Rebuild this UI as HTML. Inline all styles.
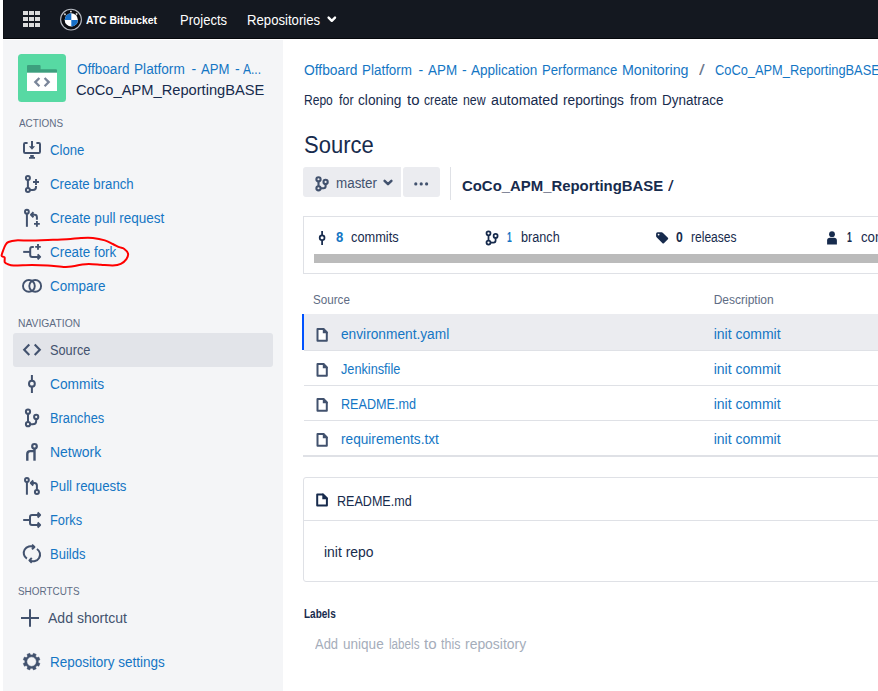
<!DOCTYPE html>
<html><head><meta charset="utf-8"><style>
html,body{margin:0;padding:0;}
body{width:878px;height:691px;overflow:hidden;position:relative;background:#fff;font-family:"Liberation Sans",sans-serif;}
.b{position:absolute;}
.t{position:absolute;white-space:nowrap;font-family:"Liberation Sans",sans-serif;}
svg.ic{position:absolute;left:0;top:0;}
</style></head><body>
<div class="b" style="left:3px;top:0;width:875px;height:39px;background:#141820;"></div>
<div class="b" style="left:3px;top:38px;width:875px;height:1px;background:#06080c;"></div>
<div class="b" style="left:3px;top:0;width:1px;height:39px;background:#0e1117;"></div>
<div class="b" style="left:3px;top:40px;width:280px;height:651px;background:#f4f5f7;"></div>
<div class="b" style="left:13px;top:333px;width:260px;height:34px;background:#e2e4e9;border-radius:3px;"></div>
<div class="b" style="left:303px;top:167px;width:98px;height:30px;background:#ebecf0;border-radius:3px 0 0 3px;"></div>
<div class="b" style="left:403px;top:167px;width:37px;height:30px;background:#ebecf0;border-radius:3px;"></div>
<div class="b" style="left:450px;top:167px;width:1px;height:33px;background:#dfe1e6;"></div>
<div class="b" style="left:303px;top:216px;width:600px;height:56px;border:1px solid #dfe1e6;"></div>
<div class="b" style="left:314px;top:254px;width:600px;height:9px;background:#bbbbbb;"></div>
<div class="b" style="left:304px;top:314px;width:574px;height:36px;background:#ebecf0;"></div>
<div class="b" style="left:302px;top:314px;width:2px;height:36px;background:#0052ff;"></div>
<div class="b" style="left:304px;top:350px;width:574px;height:1px;background:#dfe1e6;"></div>
<div class="b" style="left:304px;top:385px;width:574px;height:1px;background:#dfe1e6;"></div>
<div class="b" style="left:304px;top:420px;width:574px;height:1px;background:#dfe1e6;"></div>
<div class="b" style="left:303px;top:455px;width:575px;height:2px;background:#dfe1e6;"></div>
<div class="b" style="left:303px;top:477px;width:600px;height:103px;border:1px solid #dfe1e6;border-radius:3px;"></div>
<div class="b" style="left:304px;top:520px;width:600px;height:1px;background:#dfe1e6;"></div>

<span class="t" style="left:86.00px;top:11.50px;font-size:10.5px;line-height:16px;color:#ffffff;font-weight:bold;transform:scaleX(0.9923);transform-origin:0 0;">ATC Bitbucket</span>
<span class="t" style="left:180.00px;top:10.00px;font-size:14px;line-height:21px;color:#ffffff;transform:scaleX(0.9298);transform-origin:0 0;">Projects</span>
<span class="t" style="left:246.50px;top:10.00px;font-size:14px;line-height:21px;color:#ffffff;transform:scaleX(0.9396);transform-origin:0 0;">Repositories</span>
<span class="t" style="left:76.60px;top:59.00px;font-size:14px;line-height:21px;color:#1476c4;transform:scaleX(0.9668);transform-origin:0 0;">Offboard</span>
<span class="t" style="left:134.00px;top:59.00px;font-size:14px;line-height:21px;color:#1476c4;transform:scaleX(0.9741);transform-origin:0 0;">Platform</span>
<span class="t" style="left:191.60px;top:59.00px;font-size:14px;line-height:21px;color:#1476c4;">-</span>
<span class="t" style="left:200.70px;top:59.00px;font-size:14px;line-height:21px;color:#1476c4;transform:scaleX(0.9390);transform-origin:0 0;">APM</span>
<span class="t" style="left:234.90px;top:59.00px;font-size:14px;line-height:21px;color:#1476c4;">-</span>
<span class="t" style="left:243.30px;top:59.00px;font-size:14px;line-height:21px;color:#1476c4;transform:scaleX(0.8571);transform-origin:0 0;">A...</span>
<span class="t" style="left:76.40px;top:78.00px;font-size:15.5px;line-height:24px;color:#172b4d;transform:scaleX(0.9467);transform-origin:0 0;">CoCo_APM_ReportingBASE</span>
<span class="t" style="left:18.50px;top:115.00px;font-size:11px;line-height:17px;color:#5e6c84;transform:scaleX(0.9018);transform-origin:0 0;">ACTIONS</span>
<span class="t" style="left:49.50px;top:140.00px;font-size:14px;line-height:21px;color:#1476c4;transform:scaleX(0.9372);transform-origin:0 0;">Clone</span>
<span class="t" style="left:49.50px;top:174.00px;font-size:14px;line-height:21px;color:#1476c4;transform:scaleX(0.9436);transform-origin:0 0;">Create branch</span>
<span class="t" style="left:49.50px;top:208.00px;font-size:14px;line-height:21px;color:#1476c4;transform:scaleX(0.9662);transform-origin:0 0;">Create pull request</span>
<span class="t" style="left:49.50px;top:242.00px;font-size:14px;line-height:21px;color:#1476c4;transform:scaleX(0.9567);transform-origin:0 0;">Create fork</span>
<span class="t" style="left:49.50px;top:276.00px;font-size:14px;line-height:21px;color:#1476c4;transform:scaleX(0.9618);transform-origin:0 0;">Compare</span>
<span class="t" style="left:18.20px;top:315.00px;font-size:11px;line-height:17px;color:#5e6c84;transform:scaleX(0.9381);transform-origin:0 0;">NAVIGATION</span>
<span class="t" style="left:49.50px;top:340.00px;font-size:14px;line-height:21px;color:#42526e;transform:scaleX(0.9109);transform-origin:0 0;">Source</span>
<span class="t" style="left:49.50px;top:374.00px;font-size:14px;line-height:21px;color:#1476c4;transform:scaleX(0.9819);transform-origin:0 0;">Commits</span>
<span class="t" style="left:49.50px;top:408.00px;font-size:14px;line-height:21px;color:#1476c4;transform:scaleX(0.9163);transform-origin:0 0;">Branches</span>
<span class="t" style="left:49.50px;top:442.00px;font-size:14px;line-height:21px;color:#1476c4;transform:scaleX(0.9961);transform-origin:0 0;">Network</span>
<span class="t" style="left:49.50px;top:476.00px;font-size:14px;line-height:21px;color:#1476c4;transform:scaleX(0.9450);transform-origin:0 0;">Pull requests</span>
<span class="t" style="left:49.50px;top:510.00px;font-size:14px;line-height:21px;color:#1476c4;transform:scaleX(0.9171);transform-origin:0 0;">Forks</span>
<span class="t" style="left:49.50px;top:544.00px;font-size:14px;line-height:21px;color:#1476c4;transform:scaleX(0.9279);transform-origin:0 0;">Builds</span>
<span class="t" style="left:18.40px;top:583.00px;font-size:11px;line-height:17px;color:#5e6c84;transform:scaleX(0.9011);transform-origin:0 0;">SHORTCUTS</span>
<span class="t" style="left:47.70px;top:608.00px;font-size:14px;line-height:21px;color:#42526e;transform:scaleX(1.0038);transform-origin:0 0;">Add shortcut</span>
<span class="t" style="left:49.80px;top:652.00px;font-size:14px;line-height:21px;color:#1476c4;transform:scaleX(0.9635);transform-origin:0 0;">Repository settings</span>
<span class="t" style="left:303.50px;top:60.00px;font-size:14px;line-height:21px;color:#1476c4;transform:scaleX(0.9871);transform-origin:0 0;">Offboard</span>
<span class="t" style="left:362.00px;top:60.00px;font-size:14px;line-height:21px;color:#1476c4;transform:scaleX(0.9588);transform-origin:0 0;">Platform</span>
<span class="t" style="left:418.50px;top:60.00px;font-size:14px;line-height:21px;color:#1476c4;">-</span>
<span class="t" style="left:427.60px;top:60.00px;font-size:14px;line-height:21px;color:#1476c4;transform:scaleX(0.9588);transform-origin:0 0;">APM</span>
<span class="t" style="left:462.00px;top:60.00px;font-size:14px;line-height:21px;color:#1476c4;">-</span>
<span class="t" style="left:470.90px;top:60.00px;font-size:14px;line-height:21px;color:#1476c4;transform:scaleX(0.9664);transform-origin:0 0;">Application</span>
<span class="t" style="left:542.00px;top:60.00px;font-size:14px;line-height:21px;color:#1476c4;transform:scaleX(0.9382);transform-origin:0 0;">Performance</span>
<span class="t" style="left:621.80px;top:60.00px;font-size:14px;line-height:21px;color:#1476c4;transform:scaleX(1.0176);transform-origin:0 0;">Monitoring</span>
<span class="t" style="left:699.30px;top:60.00px;font-size:14px;line-height:21px;color:#6b778c;transform:scaleX(1.4615);transform-origin:0 0;">/</span>
<span class="t" style="left:714.70px;top:60.00px;font-size:14px;line-height:21px;color:#1476c4;transform:scaleX(0.9168);transform-origin:0 0;">CoCo_APM_ReportingBASE</span>
<span class="t" style="left:303.80px;top:90.00px;font-size:14px;line-height:21px;color:#172b4d;transform:scaleX(0.8610);transform-origin:0 0;">Repo</span>
<span class="t" style="left:338.80px;top:90.00px;font-size:14px;line-height:21px;color:#172b4d;transform:scaleX(0.8930);transform-origin:0 0;">for</span>
<span class="t" style="left:358.10px;top:90.00px;font-size:14px;line-height:21px;color:#172b4d;transform:scaleX(0.9786);transform-origin:0 0;">cloning</span>
<span class="t" style="left:406.50px;top:90.00px;font-size:14px;line-height:21px;color:#172b4d;transform:scaleX(1.0684);transform-origin:0 0;">to</span>
<span class="t" style="left:424.00px;top:90.00px;font-size:14px;line-height:21px;color:#172b4d;transform:scaleX(0.8715);transform-origin:0 0;">create</span>
<span class="t" style="left:462.90px;top:90.00px;font-size:14px;line-height:21px;color:#172b4d;transform:scaleX(0.8794);transform-origin:0 0;">new</span>
<span class="t" style="left:490.50px;top:90.00px;font-size:14px;line-height:21px;color:#172b4d;transform:scaleX(1.0144);transform-origin:0 0;">automated</span>
<span class="t" style="left:563.10px;top:90.00px;font-size:14px;line-height:21px;color:#172b4d;transform:scaleX(0.9783);transform-origin:0 0;">reportings</span>
<span class="t" style="left:629.80px;top:90.00px;font-size:14px;line-height:21px;color:#172b4d;transform:scaleX(0.9571);transform-origin:0 0;">from</span>
<span class="t" style="left:661.60px;top:90.00px;font-size:14px;line-height:21px;color:#172b4d;transform:scaleX(0.9624);transform-origin:0 0;">Dynatrace</span>
<span class="t" style="left:303.70px;top:127.00px;font-size:24px;line-height:36px;color:#172b4d;transform:scaleX(0.9165);transform-origin:0 0;">Source</span>
<span class="t" style="left:335.50px;top:173.00px;font-size:14px;line-height:21px;color:#42526e;transform:scaleX(0.9579);transform-origin:0 0;">master</span>
<span class="t" style="left:461.50px;top:174.00px;font-size:15px;line-height:23px;color:#172b4d;font-weight:bold;transform:scaleX(0.9936);transform-origin:0 0;">CoCo_APM_ReportingBASE</span>
<span class="t" style="left:668.00px;top:174.00px;font-size:15px;line-height:23px;color:#172b4d;transform:scaleX(1.3333);transform-origin:0 0;">/</span>
<span class="t" style="left:336.20px;top:227.00px;font-size:14px;line-height:21px;color:#1476c4;font-weight:bold;transform:scaleX(0.9359);transform-origin:0 0;">8</span>
<span class="t" style="left:350.80px;top:227.00px;font-size:14px;line-height:21px;color:#172b4d;transform:scaleX(0.9136);transform-origin:0 0;">commits</span>
<span class="t" style="left:506.90px;top:227.00px;font-size:14px;line-height:21px;color:#1476c4;font-weight:bold;transform:scaleX(0.6154);transform-origin:0 0;">1</span>
<span class="t" style="left:520.80px;top:227.00px;font-size:14px;line-height:21px;color:#172b4d;transform:scaleX(0.9042);transform-origin:0 0;">branch</span>
<span class="t" style="left:676.20px;top:227.00px;font-size:14px;line-height:21px;color:#172b4d;font-weight:bold;transform:scaleX(0.8718);transform-origin:0 0;">0</span>
<span class="t" style="left:690.80px;top:227.00px;font-size:14px;line-height:21px;color:#172b4d;transform:scaleX(0.8620);transform-origin:0 0;">releases</span>
<span class="t" style="left:846.60px;top:227.00px;font-size:14px;line-height:21px;color:#172b4d;font-weight:bold;transform:scaleX(0.6282);transform-origin:0 0;">1</span>
<span class="t" style="left:860.80px;top:227.00px;font-size:14px;line-height:21px;color:#172b4d;transform:scaleX(0.9460);transform-origin:0 0;">contributors</span>
<span class="t" style="left:313.20px;top:291.00px;font-size:12px;line-height:18px;color:#5e6c84;transform:scaleX(0.9711);transform-origin:0 0;">Source</span>
<span class="t" style="left:713.70px;top:291.00px;font-size:12px;line-height:18px;color:#5e6c84;">Description</span>
<span class="t" style="left:340.60px;top:324.00px;font-size:14px;line-height:21px;color:#1476c4;transform:scaleX(0.9792);transform-origin:0 0;">environment.yaml</span>
<span class="t" style="left:713.70px;top:324.00px;font-size:14px;line-height:21px;color:#1476c4;">init commit</span>
<span class="t" style="left:340.60px;top:359.00px;font-size:14px;line-height:21px;color:#1476c4;transform:scaleX(0.9074);transform-origin:0 0;">Jenkinsfile</span>
<span class="t" style="left:713.70px;top:359.00px;font-size:14px;line-height:21px;color:#1476c4;">init commit</span>
<span class="t" style="left:340.60px;top:394.00px;font-size:14px;line-height:21px;color:#1476c4;transform:scaleX(0.8997);transform-origin:0 0;">README.md</span>
<span class="t" style="left:713.70px;top:394.00px;font-size:14px;line-height:21px;color:#1476c4;">init commit</span>
<span class="t" style="left:340.60px;top:429.00px;font-size:14px;line-height:21px;color:#1476c4;transform:scaleX(0.9746);transform-origin:0 0;">requirements.txt</span>
<span class="t" style="left:713.70px;top:429.00px;font-size:14px;line-height:21px;color:#1476c4;">init commit</span>
<span class="t" style="left:336.50px;top:491.00px;font-size:14px;line-height:21px;color:#172b4d;transform:scaleX(0.8973);transform-origin:0 0;">README.md</span>
<span class="t" style="left:324.00px;top:541.50px;font-size:14px;line-height:21px;color:#172b4d;transform:scaleX(0.9940);transform-origin:0 0;">init repo</span>
<span class="t" style="left:304.00px;top:605.00px;font-size:12px;line-height:18px;color:#172b4d;font-weight:bold;transform:scaleX(0.8342);transform-origin:0 0;">Labels</span>
<span class="t" style="left:315.00px;top:634.00px;font-size:14px;line-height:21px;color:#a5adba;transform:scaleX(0.9237);transform-origin:0 0;">Add</span>
<span class="t" style="left:343.30px;top:634.00px;font-size:14px;line-height:21px;color:#a5adba;transform:scaleX(0.9679);transform-origin:0 0;">unique</span>
<span class="t" style="left:389.00px;top:634.00px;font-size:14px;line-height:21px;color:#a5adba;transform:scaleX(0.8333);transform-origin:0 0;">labels</span>
<span class="t" style="left:424.00px;top:634.00px;font-size:14px;line-height:21px;color:#a5adba;transform:scaleX(1.0769);transform-origin:0 0;">to</span>
<span class="t" style="left:441.00px;top:634.00px;font-size:14px;line-height:21px;color:#a5adba;transform:scaleX(0.8899);transform-origin:0 0;">this</span>
<span class="t" style="left:465.40px;top:634.00px;font-size:14px;line-height:21px;color:#a5adba;transform:scaleX(0.9943);transform-origin:0 0;">repository</span>
<svg class="ic" width="878" height="691" viewBox="0 0 878 691">
<g fill="#dcdcdc">
<rect x="23" y="11" width="5" height="4"/><rect x="29" y="11" width="5" height="4"/><rect x="35" y="11" width="5" height="4"/>
<rect x="23" y="17" width="5" height="4"/><rect x="29" y="17" width="5" height="4"/><rect x="35" y="17" width="5" height="4"/>
<rect x="23" y="23" width="5" height="4"/><rect x="29" y="23" width="5" height="4"/><rect x="35" y="23" width="5" height="4"/>
</g>
<circle cx="71" cy="19.6" r="10.4" fill="#0b0d12" stroke="#b8bcc4" stroke-width="1.1"/>
<g fill="#d8d8d8"><rect x="64.1" y="13.4" width="1.7" height="1.7" transform="rotate(-45 65 14.3)"/><rect x="70" y="10.8" width="1.8" height="1.6"/><rect x="75.8" y="13.2" width="1.7" height="1.7" transform="rotate(45 76.6 14)"/></g>
<circle cx="71.3" cy="19.9" r="6.6" fill="#ffffff"/>
<path d="M71.3 19.9 L71.3 13.3 A6.6 6.6 0 0 0 64.7 19.9 Z" fill="#1770c8"/>
<path d="M71.3 19.9 L71.3 26.5 A6.6 6.6 0 0 0 77.9 19.9 Z" fill="#1770c8"/>
<path d="M328.6 17.6 L331.8 20.8 L335 17.6" fill="none" stroke="#fff" stroke-width="2.4" stroke-linecap="round" stroke-linejoin="round"/>

<!-- repo avatar -->
<rect x="18" y="54" width="48" height="48" rx="3.5" fill="#57d9a3"/>
<path d="M27 66 Q27 65 28 65 H39.6 Q40.6 65 40.6 66 V69.3 H56 Q57 69.3 57 70.3 V73 H27 Z" fill="#3d9f7e"/>
<rect x="27" y="72.7" width="30" height="18.3" fill="#ffffff"/>
<path d="M39.4 78 L35.3 82.1 L39.4 86.2 M44.6 78 L48.7 82.1 L44.6 86.2" fill="none" stroke="#7a869a" stroke-width="2.3" stroke-linecap="butt"/>

<g fill="none" stroke="#42526e" stroke-width="2" stroke-linecap="butt" stroke-linejoin="round">
<!-- clone -->
<path d="M27.6 143 H25.2 Q24 143 24 144.2 V151.8 Q24 153 25.2 153 H38.8 Q40 153 40 151.8 V144.2 Q40 143 38.8 143 H36.4"/>
<path d="M32 141 V147"/>
<path d="M28.9 146.2 H35.1 L32 149.8 Z M30.2 155 H33.8 V156.9 H35 V158.8 H29 V156.9 H30.2 Z" fill="#42526e" stroke="none"/>
<!-- create branch -->
<circle cx="27.9" cy="178" r="2"/><circle cx="27.9" cy="190" r="2"/>
<path d="M27.9 180 V188 M29.9 190 H33 Q36 190 36 187 V186"/>
<path d="M33 182 H39 M36 179 V185" stroke-width="1.9"/>
<!-- create pull request -->
<circle cx="26.9" cy="211.7" r="1.9"/>
<path d="M26.9 213.6 V226.8"/>
<path d="M36.9 219.8 V217.2 Q36.9 214.8 34.5 214.8 H31.5"/>
<path d="M33.5 212.3 L31 214.8 L33.5 217.3"/>
<path d="M34 223.9 H39.8 M36.9 221 V226.8" stroke-width="1.9"/>
<!-- create fork -->
<path d="M23.2 251.9 H30.2"/>
<path d="M33.8 246.9 H32.2 Q30.2 246.9 30.2 248.9 V254.9 Q30.2 256.9 32.2 256.9 H39.8"/>
<path d="M37.6 254.4 L40.1 256.9 L37.6 259.4"/>
<path d="M35.2 246.9 H40.8 M38 244.1 V249.7" stroke-width="1.9"/>
<!-- compare -->
<circle cx="28.9" cy="285.9" r="5.9" stroke-width="1.9"/><circle cx="35.2" cy="285.9" r="5.9" stroke-width="1.9"/>
<!-- source -->
<path d="M29.3 344.6 L24.2 349.8 L29.3 355 M34.7 344.6 L39.8 349.8 L34.7 355" stroke-width="2.1" stroke-linejoin="miter"/>
<!-- commits -->
<path d="M31.9 375 V380.8 M31.9 386.6 V393"/>
<circle cx="31.9" cy="383.7" r="2.9"/>
<!-- branches -->
<circle cx="28" cy="411.7" r="2.1"/><circle cx="28" cy="424.2" r="2.1"/><circle cx="36.2" cy="416.9" r="2.1"/>
<path d="M28 413.8 V422.1 M36.2 419 V420.7 Q36.2 424.2 32.7 424.2 H30.1"/>
<!-- network -->
<circle cx="34.5" cy="446.3" r="2.3" stroke-width="2.2"/>
<path d="M34.5 448.6 V460.7" stroke-width="2.4"/>
<path d="M27.3 460.7 V454.1 Q27.3 451.1 30.3 451.1 H34.5" stroke-width="2.4"/>
<!-- pull requests -->
<circle cx="26.9" cy="480" r="1.9"/>
<path d="M26.9 481.9 V494.7"/>
<path d="M36.9 490.1 V485.5 Q36.9 483 34.4 483 H31.3"/>
<path d="M33.3 480.5 L30.8 483 L33.3 485.5"/>
<circle cx="36.9" cy="492.1" r="2"/>
<!-- forks -->
<path d="M23.2 520 H30"/>
<path d="M40 515 H32 Q30 515 30 517 V523 Q30 525 32 525 H40"/>
<path d="M37.6 512.5 L40.1 515 L37.6 517.5 M37.6 522.5 L40.1 525 L37.6 527.5"/>
<!-- builds -->
<path d="M26.9 558.6 A6.5 6.5 0 0 1 33.8 547.3"/>
<path d="M32 544.6 L34.4 547 L32 549.4"/>
<path d="M36.9 549 A6.5 6.5 0 0 1 30 560.3"/>
<path d="M31.8 558 L29.4 560.4 L31.8 562.8"/>
<!-- add shortcut -->
<path d="M21 618 H39 M30 609.2 V626.8"/>
</g>
<!-- gear -->
<path d="M38.21 662.71 L39.90 663.42 L38.76 666.19 L37.06 665.48 A6.7 6.7 0 0 1 35.48 667.06 L36.19 668.76 L33.42 669.90 L32.71 668.21 A6.7 6.7 0 0 1 30.49 668.21 L29.78 669.90 L27.01 668.76 L27.72 667.06 A6.7 6.7 0 0 1 26.14 665.48 L24.44 666.19 L23.30 663.42 L24.99 662.71 A6.7 6.7 0 0 1 24.99 660.49 L23.30 659.78 L24.44 657.01 L26.14 657.72 A6.7 6.7 0 0 1 27.72 656.14 L27.01 654.44 L29.78 653.30 L30.49 654.99 A6.7 6.7 0 0 1 32.71 654.99 L33.42 653.30 L36.19 654.44 L35.48 656.14 A6.7 6.7 0 0 1 37.06 657.72 L38.76 657.01 L39.90 659.78 L38.21 660.49 A6.7 6.7 0 0 1 38.21 662.71 Z M36.40 661.60 A4.8 4.8 0 1 0 26.80 661.60 A4.8 4.8 0 1 0 36.40 661.60 Z" fill="#42526e" fill-rule="evenodd" stroke="#42526e" stroke-width="0.6" stroke-linejoin="round"/>

<!-- branch button icon -->
<g fill="none" stroke="#42526e" stroke-width="2.1">
<circle cx="318.5" cy="179.3" r="2.1"/><circle cx="318.5" cy="188.3" r="2.1"/><circle cx="325.6" cy="181.9" r="2.1"/>
<path d="M318.5 181.4 V186.2 M325.6 184 V186.3 Q325.6 188.3 323.6 188.3 H320.6"/>
</g>
<path d="M384.6 180.8 L388 184.2 L391.4 180.8" fill="none" stroke="#42526e" stroke-width="2.5" stroke-linecap="round" stroke-linejoin="round"/>
<g fill="#42526e"><circle cx="415.8" cy="183.9" r="1.6"/><circle cx="421.2" cy="183.9" r="1.6"/><circle cx="426.6" cy="183.9" r="1.6"/></g>

<!-- stats icons -->
<g fill="none" stroke="#172b4d" stroke-width="1.75">
<path d="M322.1 231 V235.4 M322.1 240.2 V245"/>
<circle cx="322.1" cy="237.8" r="2.4"/>
<circle cx="488.5" cy="233.3" r="2"/><circle cx="488.5" cy="242.5" r="2"/><circle cx="495.6" cy="235.9" r="2"/>
<path d="M488.5 235.3 V240.5 M495.6 237.9 V240.5 Q495.6 242.5 493.6 242.5 H490.5"/>
</g>
<path d="M657.6 232.3 H661.6 Q662.4 232.3 663 232.9 L667.9 237.8 Q668.6 238.5 667.9 239.2 L663.9 243.2 Q663.2 243.9 662.5 243.2 L656.6 237.3 Q656.1 236.8 656.1 236 V233.8 Q656.1 232.3 657.6 232.3 Z" fill="#172b4d"/>
<circle cx="658.6" cy="234.6" r="0.9" fill="#fff"/>
<circle cx="832" cy="234.2" r="2.9" fill="#172b4d"/>
<path d="M827.1 244.4 V240.6 Q827.1 237.8 830 237.8 H834 Q836.9 237.8 836.9 240.6 V244.4 Z" fill="#172b4d"/>

<!-- file icons -->
<g fill="#ffffff" stroke="#42526e" stroke-width="2" stroke-linejoin="round">
<path d="M317.5 329.1 H323.3 L326.8 332.6 V340.8 H317.5 Z"/>
<path d="M317.5 364.1 H323.3 L326.8 367.6 V375.8 H317.5 Z"/>
<path d="M317.5 399.1 H323.3 L326.8 402.6 V410.8 H317.5 Z"/>
<path d="M317.5 434.1 H323.3 L326.8 437.6 V445.8 H317.5 Z"/>
</g>
<g fill="#42526e">
<path d="M322.8 328.1 H324 L327.8 331.9 V333.3 H322.8 Z"/>
<path d="M322.8 363.1 H324 L327.8 366.9 V368.3 H322.8 Z"/>
<path d="M322.8 398.1 H324 L327.8 401.9 V403.3 H322.8 Z"/>
<path d="M322.8 433.1 H324 L327.8 436.9 V438.3 H322.8 Z"/>
</g>
<path d="M317.2 494.4 H322.8 L326.9 498.5 V505.4 H317.2 Z" fill="#fff" stroke="#172b4d" stroke-width="2" stroke-linejoin="round"/>
<path d="M322.3 493.4 H323.3 L327.9 498 V499.3 H322.3 Z" fill="#172b4d"/>

<!-- red annotation -->
<path d="M1.6 255.9 C1.4 254.7 2.5 252.2 3.2 250.3 C3.9 248.4 4.7 246.1 5.6 244.7 C6.5 243.3 6.8 242.7 8.5 242.0 C10.2 241.3 12.0 240.6 15.9 240.4 C19.8 240.2 26.6 240.7 31.9 240.6 C37.2 240.5 41.9 240.2 47.8 240.0 C53.6 239.8 61.5 239.6 67.0 239.3 C72.5 239.0 76.7 238.2 81.0 238.0 C85.3 237.8 88.9 237.6 92.9 238.0 C96.9 238.4 101.6 239.4 104.9 240.4 C108.2 241.4 110.4 242.9 112.8 244.0 C115.2 245.1 117.3 246.3 119.2 247.1 C121.1 247.9 122.5 247.6 124.0 248.7 C125.5 249.8 127.6 251.8 128.0 253.5 C128.4 255.2 127.6 257.4 126.4 259.1 C125.2 260.8 123.1 262.8 120.8 263.9 C118.5 265.0 116.1 265.4 112.8 265.5 C109.5 265.6 104.9 265.0 100.9 264.7 C96.9 264.4 92.2 263.9 88.9 263.9 C85.6 263.9 83.7 264.3 81.0 264.7 C78.3 265.1 75.7 265.9 73.0 266.3 C70.3 266.7 69.2 267.1 65.0 267.0 C60.8 266.9 53.3 265.8 47.8 265.5 C42.3 265.2 37.6 265.1 31.9 265.1 C26.2 265.1 17.6 265.6 13.6 265.5 C9.6 265.4 9.5 264.7 8.0 264.2 C6.5 263.7 5.4 263.4 4.8 262.3 C4.2 261.2 5.1 258.5 4.6 257.4 C4.1 256.3 1.8 257.1 1.6 255.9 Z" fill="none" stroke="#ff0000" stroke-width="2" stroke-linejoin="round"/>
</svg>

</body></html>
